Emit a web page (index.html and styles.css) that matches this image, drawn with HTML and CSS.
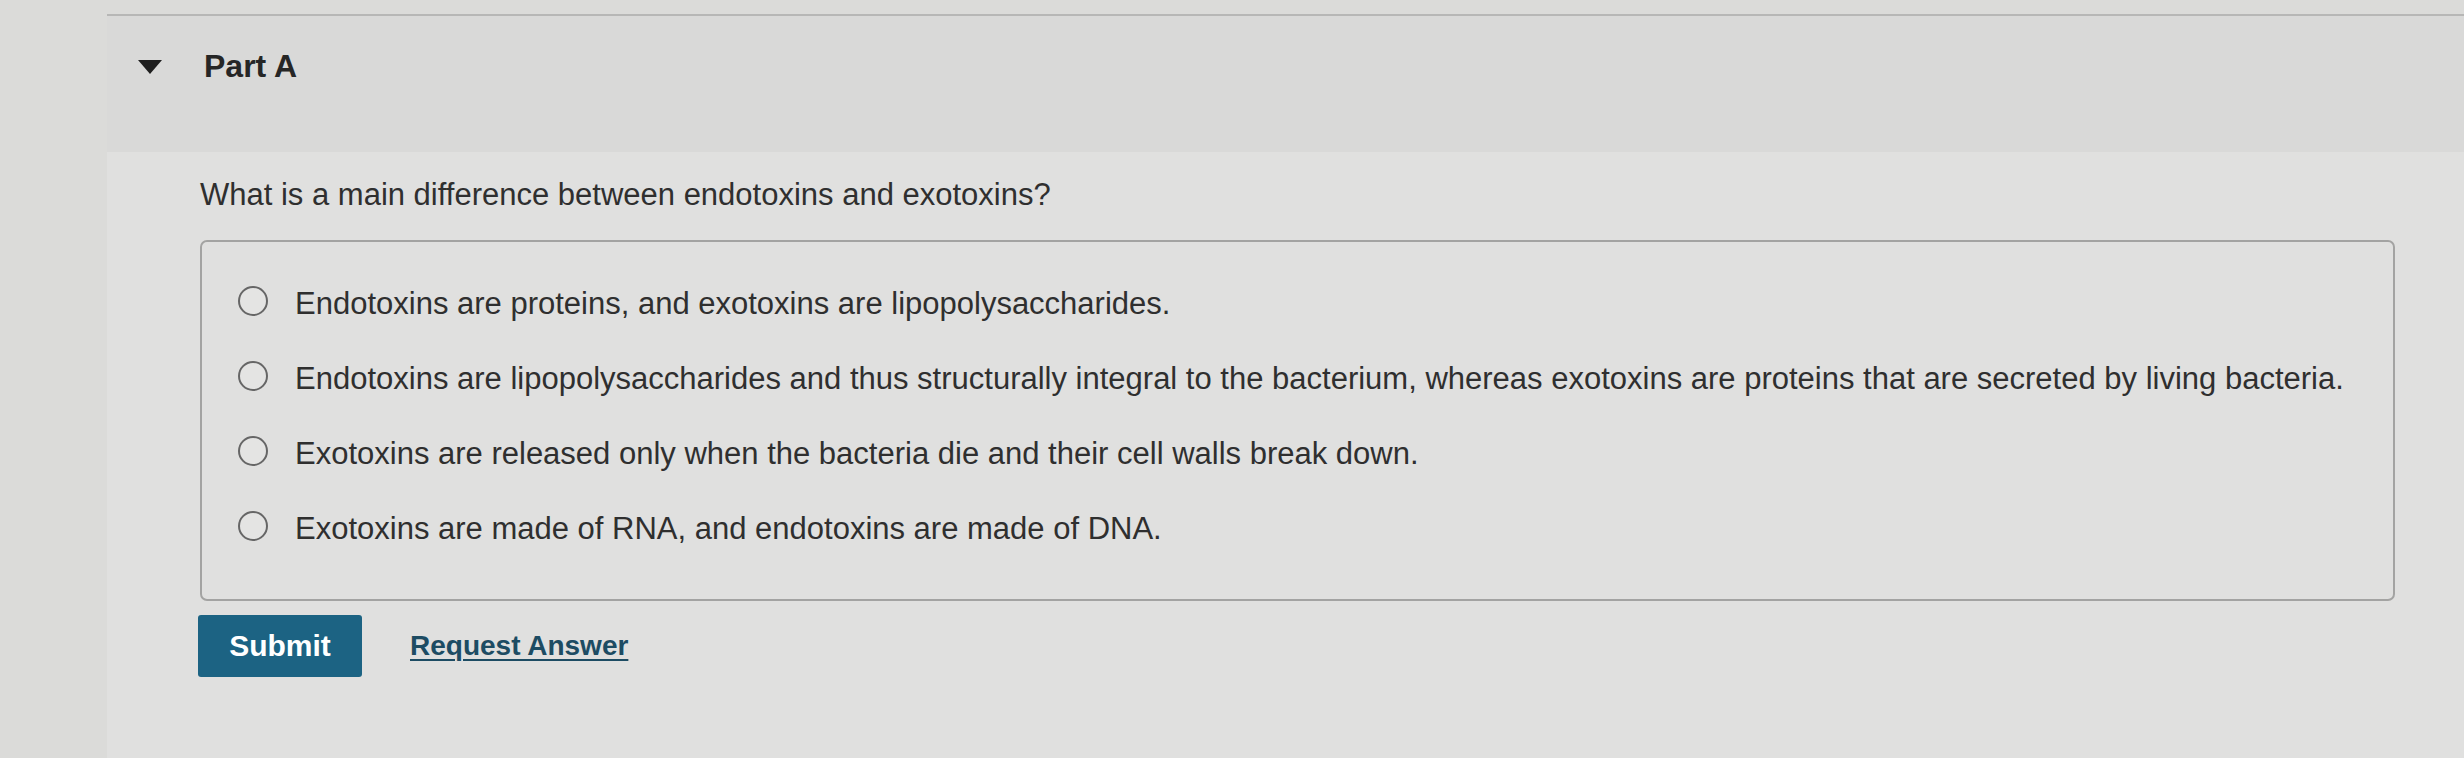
FILE: index.html
```html
<!DOCTYPE html>
<html lang="en">
<head>
<meta charset="utf-8">
<title>Part A</title>
<link rel="stylesheet" href="styles.css">
</head>
<body>
<div class="page">
  <section class="part">
    <div class="part-header">
      <span class="caret"></span>
      <h2 class="part-title">Part A</h2>
    </div>
    <div class="part-body">
      <p class="question">What is a main difference between endotoxins and exotoxins?</p>
      <div class="answers">
        <label class="option"><span class="radio"></span><span class="option-text">Endotoxins are proteins, and exotoxins are lipopolysaccharides.</span></label>
        <label class="option"><span class="radio"></span><span class="option-text">Endotoxins are lipopolysaccharides and thus structurally integral to the bacterium, whereas exotoxins are proteins that are secreted by living bacteria.</span></label>
        <label class="option"><span class="radio"></span><span class="option-text">Exotoxins are released only when the bacteria die and their cell walls break down.</span></label>
        <label class="option"><span class="radio"></span><span class="option-text">Exotoxins are made of RNA, and endotoxins are made of DNA.</span></label>
      </div>
      <div class="actions">
        <button class="submit" type="button">Submit</button>
        <a class="request" href="#">Request Answer</a>
      </div>
    </div>
  </section>
</div>
</body>
</html>
```
FILE: styles.css
```css
html, body {
  margin: 0;
  padding: 0;
}
body {
  background: #dbdbd9;
  font-family: "Liberation Sans", Arial, sans-serif;
  color: #2f2f2f;
  width: 2464px;
  height: 758px;
  overflow: hidden;
}
.page {
  padding: 14px 0 0 107px;
}
.part {
  border-top: 2px solid #b7b7b6;
  background: #e0e0df;
  min-height: 742px;
}
.part-header {
  height: 136px;
  background: #d9d9d8;
  display: flex;
  align-items: flex-start;
  padding: 32px 0 0 31px;
  box-sizing: border-box;
}
.caret {
  width: 0;
  height: 0;
  border-left: 12px solid transparent;
  border-right: 12px solid transparent;
  border-top: 14px solid #1f1f1f;
  margin-right: 42px;
  margin-top: 12px;
}
.part-title {
  margin: 0;
  font-size: 32px;
  line-height: 36px;
  font-weight: bold;
  color: #262626;
}
.part-body {
  padding-left: 93px;
  padding-right: 69px;
}
.question {
  margin: 0;
  padding-top: 25px;
  font-size: 31px;
  line-height: 36px;
  height: 63px;
}
.answers {
  border: 2px solid #a3a3a2;
  border-radius: 7px;
  height: 361px;
  box-sizing: border-box;
  padding: 21px 40px 0 36px;
  display: flex;
  flex-direction: column;
}
.option {
  display: flex;
  align-items: center;
  height: 75px;
  font-size: 31px;
}
.option-text {
  padding-top: 6px;
}
.radio {
  width: 26px;
  height: 26px;
  border: 2px solid #666666;
  border-radius: 50%;
  flex: none;
  margin-right: 27px;
  background: #e4e4e3;
}
.actions {
  display: flex;
  align-items: center;
  margin-top: 14px;
  gap: 48px;
}
.submit {
  background: #1c6383;
  color: #ffffff;
  border: none;
  border-radius: 3px;
  font-family: "Liberation Sans", Arial, sans-serif;
  font-size: 30px;
  font-weight: bold;
  height: 62px;
  width: 164px;
  margin-left: -2px;
  padding: 0;
}
.request {
  color: #1d4c63;
  font-size: 28px;
  font-weight: bold;
  text-decoration: underline;
  text-underline-offset: 4px;
  text-decoration-thickness: 2px;
}
```
